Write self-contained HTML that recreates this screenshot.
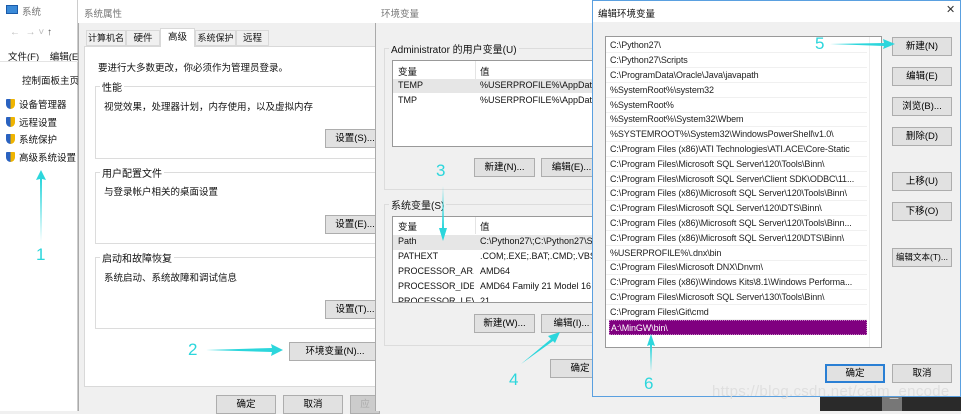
<!DOCTYPE html>
<html><head><meta charset="utf-8"><style>
*{margin:0;padding:0;box-sizing:border-box}
body{width:961px;height:411px;overflow:hidden;position:relative;background:#f0f0f0;font-family:"Liberation Sans","Noto Sans CJK SC",sans-serif;font-size:9.5px;color:#111}
.a{position:absolute;white-space:nowrap}
.btn{position:absolute;background:#e1e1e1;border:1px solid #adadad;text-align:center;font-size:9.5px;line-height:17px;height:19px;color:#000;white-space:nowrap;overflow:hidden}
.gb{position:absolute;border:1px solid #dcdcdc}
.gl{position:absolute;background:#fff;padding:0 2px;font-size:10px;top:-8px;left:4px;white-space:nowrap}
.cy{color:#2cd6dc;font-size:17px;position:absolute;font-family:"Liberation Sans",sans-serif}
.row{position:absolute;left:0;right:14px;height:15px;border-bottom:1px solid #f0f0f0;padding-left:4px;font-size:9px;line-height:14px;color:#222;white-space:nowrap;overflow:hidden;letter-spacing:-0.1px}
.sh{display:inline-block;width:9px;height:10px;background:linear-gradient(90deg,#2a62c0 50%,#f0b400 50%);border-radius:1px 1px 5px 5px;vertical-align:-1px;margin-right:4px}
</style></head><body>
<!-- window 1 -->
<div class="a" style="left:0;top:0;width:78px;height:411px;background:#fff;border-right:1px solid #ccc"></div>
<div class="a" style="left:6px;top:5px;width:12px;height:9px;background:#3a8ad8;border:1px solid #1a5aa8"></div>
<div class="a" style="left:22px;top:4px;color:#777">系统</div>
<div class="a" style="left:10px;top:27px;color:#bbb;font-size:10px">←&nbsp; → ˅ <span style="color:#555">↑</span></div>
<div class="a" style="left:8px;top:49px;font-size:9.5px">文件(F)&nbsp;&nbsp;&nbsp;&nbsp;编辑(E)</div>
<div class="a" style="left:0;top:61px;width:78px;border-top:1px solid #e4e4e4"></div>
<div class="a" style="left:22px;top:73px">控制面板主页</div>
<div class="a" style="left:6px;top:97px;line-height:17.5px">
<div><span class="sh"></span>设备管理器</div><div><span class="sh"></span>远程设置</div><div><span class="sh"></span>系统保护</div><div><span class="sh"></span>高级系统设置</div></div>
<!-- window 2 -->
<div class="a" style="left:78px;top:0;width:300px;height:411px;background:#f0f0f0;border-left:1px solid #aaa"></div>
<div class="a" style="left:78px;top:0;width:300px;height:23px;background:#fff"></div>
<div class="a" style="left:84px;top:6px;color:#777">系统属性</div>
<div class="a" style="left:84px;top:46px;width:294px;height:341px;background:#fff;border:1px solid #d9d9d9"></div>
<div class="a" style="left:86px;top:30px;width:40px;height:16px;border:1px solid #d9d9d9;background:#f0f0f0;text-align:center;line-height:15px;font-size:9px">计算机名</div>
<div class="a" style="left:126px;top:30px;width:34px;height:16px;border:1px solid #d9d9d9;background:#f0f0f0;text-align:center;line-height:15px">硬件</div>
<div class="a" style="left:160px;top:28px;width:35px;height:19px;border:1px solid #d9d9d9;border-bottom:none;background:#fff;text-align:center;line-height:17px">高级</div>
<div class="a" style="left:195px;top:30px;width:41px;height:16px;border:1px solid #d9d9d9;background:#f0f0f0;text-align:center;line-height:15px;font-size:9px">系统保护</div>
<div class="a" style="left:236px;top:30px;width:33px;height:16px;border:1px solid #d9d9d9;background:#f0f0f0;text-align:center;line-height:15px">远程</div>
<div class="a" style="left:98px;top:60px">要进行大多数更改，你必须作为管理员登录。</div>
<div class="gb" style="left:95px;top:86px;width:290px;height:73px"><span class="gl">性能</span></div>
<div class="a" style="left:104px;top:99px">视觉效果，处理器计划，内存使用，以及虚拟内存</div>
<div class="btn" style="left:325px;top:129px;width:60px">设置(S)...</div>
<div class="gb" style="left:95px;top:172px;width:290px;height:72px"><span class="gl">用户配置文件</span></div>
<div class="a" style="left:104px;top:184px">与登录帐户相关的桌面设置</div>
<div class="btn" style="left:325px;top:215px;width:60px">设置(E)...</div>
<div class="gb" style="left:95px;top:257px;width:290px;height:72px"><span class="gl">启动和故障恢复</span></div>
<div class="a" style="left:104px;top:270px">系统启动、系统故障和调试信息</div>
<div class="btn" style="left:325px;top:300px;width:60px">设置(T)...</div>
<div class="btn" style="left:289px;top:342px;width:92px">环境变量(N)...</div>
<div class="btn" style="left:216px;top:395px;width:60px">确定</div>
<div class="btn" style="left:283px;top:395px;width:60px">取消</div>
<div class="btn" style="left:350px;top:395px;width:30px;color:#aaa;background:#ccc">应</div>
<!-- window 3 -->
<div class="a" style="left:375px;top:0;width:218px;height:411px;background:#f0f0f0;border-left:1px solid #aaa"></div>
<div class="a" style="left:375px;top:0;width:218px;height:23px;background:#fff"></div>
<div class="a" style="left:381px;top:6px;color:#777">环境变量</div>
<div class="gb" style="left:384px;top:48px;width:220px;height:142px;"><span class="gl" style="background:#f0f0f0">Administrator 的用户变量(U)</span></div>
<div class="a" style="left:392px;top:60px;width:210px;height:87px;background:#fff;border:1px solid #999"></div>
<div class="a" style="left:475px;top:61px;height:18px;border-left:1px solid #e4e4e4"></div>
<div class="a" style="left:398px;top:64px">变量</div><div class="a" style="left:480px;top:64px">值</div>
<div class="a" style="left:393px;top:79px;width:200px;height:14px;background:#e6e6e6"></div>
<div class="a" style="left:398px;top:80px;font-size:9px">TEMP</div><div class="a" style="left:480px;top:80px;font-size:9px">%USERPROFILE%\AppData</div>
<div class="a" style="left:398px;top:95px;font-size:9px">TMP</div><div class="a" style="left:480px;top:95px;font-size:9px">%USERPROFILE%\AppData</div>
<div class="btn" style="left:474px;top:158px;width:61px">新建(N)...</div>
<div class="btn" style="left:541px;top:158px;width:61px">编辑(E)...</div>
<div class="gb" style="left:384px;top:204px;width:220px;height:142px;"><span class="gl" style="background:#f0f0f0">系统变量(S)</span></div>
<div class="a" style="left:392px;top:216px;width:210px;height:87px;background:#fff;border:1px solid #999;overflow:hidden;font-size:9px">
<div class="a" style="left:82px;top:0;height:17px;border-left:1px solid #e4e4e4"></div>
<div class="a" style="left:5px;top:2px;font-size:9.5px">变量</div><div class="a" style="left:87px;top:2px;font-size:9.5px">值</div>
<div class="a" style="left:0;top:18px;width:210px;height:15px;background:#e6e6e6"></div>
<div class="a" style="left:5px;top:19px">Path</div><div class="a" style="left:87px;top:19px">C:\Python27\;C:\Python27\S</div>
<div class="a" style="left:5px;top:34px">PATHEXT</div><div class="a" style="left:87px;top:34px">.COM;.EXE;.BAT;.CMD;.VBS;</div>
<div class="a" style="left:5px;top:49px;width:76px;overflow:hidden">PROCESSOR_AR...</div><div class="a" style="left:87px;top:49px">AMD64</div>
<div class="a" style="left:5px;top:64px;width:76px;overflow:hidden">PROCESSOR_IDE...</div><div class="a" style="left:87px;top:64px">AMD64 Family 21 Model 16</div>
<div class="a" style="left:5px;top:79px;width:76px;overflow:hidden">PROCESSOR_LEV...</div><div class="a" style="left:87px;top:79px">21</div></div>
<div class="btn" style="left:474px;top:314px;width:61px">新建(W)...</div>
<div class="btn" style="left:541px;top:314px;width:61px">编辑(I)...</div>
<div class="btn" style="left:550px;top:359px;width:60px">确定</div>
<!-- window 4 -->
<div class="a" style="left:592px;top:0;width:369px;height:397px;background:#f0f0f0;border:1px solid #5aa0e0"></div>
<div class="a" style="left:593px;top:1px;width:367px;height:21px;background:#fff"></div>
<div class="a" style="left:598px;top:6px">编辑环境变量</div>
<div class="a" style="left:946px;top:3px;font-size:11px;color:#333">✕</div>
<div class="a" style="left:605px;top:36px;width:277px;height:312px;background:#fff;border:1px solid #999;overflow:hidden">
<div class="a" style="left:263px;top:0;height:312px;border-left:1px solid #eee"></div>
<div class="row" style="top:1px">C:\Python27\</div>
<div class="row" style="top:16px">C:\Python27\Scripts</div>
<div class="row" style="top:31px">C:\ProgramData\Oracle\Java\javapath</div>
<div class="row" style="top:46px">%SystemRoot%\system32</div>
<div class="row" style="top:61px">%SystemRoot%</div>
<div class="row" style="top:75px">%SystemRoot%\System32\Wbem</div>
<div class="row" style="top:90px">%SYSTEMROOT%\System32\WindowsPowerShell\v1.0\</div>
<div class="row" style="top:105px">C:\Program Files (x86)\ATI Technologies\ATI.ACE\Core-Static</div>
<div class="row" style="top:120px">C:\Program Files\Microsoft SQL Server\120\Tools\Binn\</div>
<div class="row" style="top:135px">C:\Program Files\Microsoft SQL Server\Client SDK\ODBC\11...</div>
<div class="row" style="top:149px">C:\Program Files (x86)\Microsoft SQL Server\120\Tools\Binn\</div>
<div class="row" style="top:164px">C:\Program Files\Microsoft SQL Server\120\DTS\Binn\</div>
<div class="row" style="top:179px">C:\Program Files (x86)\Microsoft SQL Server\120\Tools\Binn...</div>
<div class="row" style="top:194px">C:\Program Files (x86)\Microsoft SQL Server\120\DTS\Binn\</div>
<div class="row" style="top:209px">%USERPROFILE%\.dnx\bin</div>
<div class="row" style="top:223px">C:\Program Files\Microsoft DNX\Dnvm\</div>
<div class="row" style="top:238px">C:\Program Files (x86)\Windows Kits\8.1\Windows Performa...</div>
<div class="row" style="top:253px">C:\Program Files\Microsoft SQL Server\130\Tools\Binn\</div>
<div class="row" style="top:268px">C:\Program Files\Git\cmd</div>
<div class="row" style="top:283px;left:3px;right:14px;background:#800080;color:#fff;padding-left:1px;border:1px dotted #c080c0">A:\MinGW\bin\</div>
</div>
<div class="btn" style="left:892px;top:37px;width:60px">新建(N)</div>
<div class="btn" style="left:892px;top:67px;width:60px">编辑(E)</div>
<div class="btn" style="left:892px;top:97px;width:60px">浏览(B)...</div>
<div class="btn" style="left:892px;top:127px;width:60px">删除(D)</div>
<div class="btn" style="left:892px;top:172px;width:60px">上移(U)</div>
<div class="btn" style="left:892px;top:202px;width:60px">下移(O)</div>
<div class="btn" style="left:892px;top:248px;width:60px;font-size:8.5px">编辑文本(T)...</div>
<div class="btn" style="left:825px;top:364px;width:60px;border:2px solid #2a7fd4;line-height:15px">确定</div>
<div class="btn" style="left:892px;top:364px;width:60px">取消</div>
<div class="a" style="left:820px;top:397px;width:141px;height:14px;background:#2a2a2a"></div>
<div class="a" style="left:882px;top:397px;width:20px;height:14px;background:#777"></div>
<div class="a" style="left:712px;top:383px;font-size:15px;color:rgba(220,220,220,.85);letter-spacing:0.3px">https://blog.csdn.net/calm_encode</div>
<!-- annotations -->
<svg class="a" style="left:0;top:0" width="961" height="411">
<g fill="#2cd6dc" stroke="none">
<path d="M41 170 L36 180 L40 179 L41 242 L42 179 L46 180 Z"/>
<path d="M206 350 L272 348 L271 344 L283 350 L271 356 L272 352 Z"/>
<path d="M443 186 L444 228 L447 228 L443 241 L439 228 L442 228 Z"/>
<path d="M521 364 L551 339 L548 336 L560 332 L555 343 L553 341 Z"/>
<path d="M830 44 L884 43 L883 39 L895 44 L883 49 L884 46 Z"/>
<path d="M651 372 L650 345 L647 346 L651 334 L655 346 L652 345 Z"/>
</g></svg>
<div class="cy" style="left:36px;top:245px">1</div>
<div class="cy" style="left:188px;top:340px">2</div>
<div class="cy" style="left:436px;top:161px">3</div>
<div class="cy" style="left:509px;top:370px">4</div>
<div class="cy" style="left:815px;top:34px">5</div>
<div class="cy" style="left:644px;top:374px">6</div>
</body></html>
